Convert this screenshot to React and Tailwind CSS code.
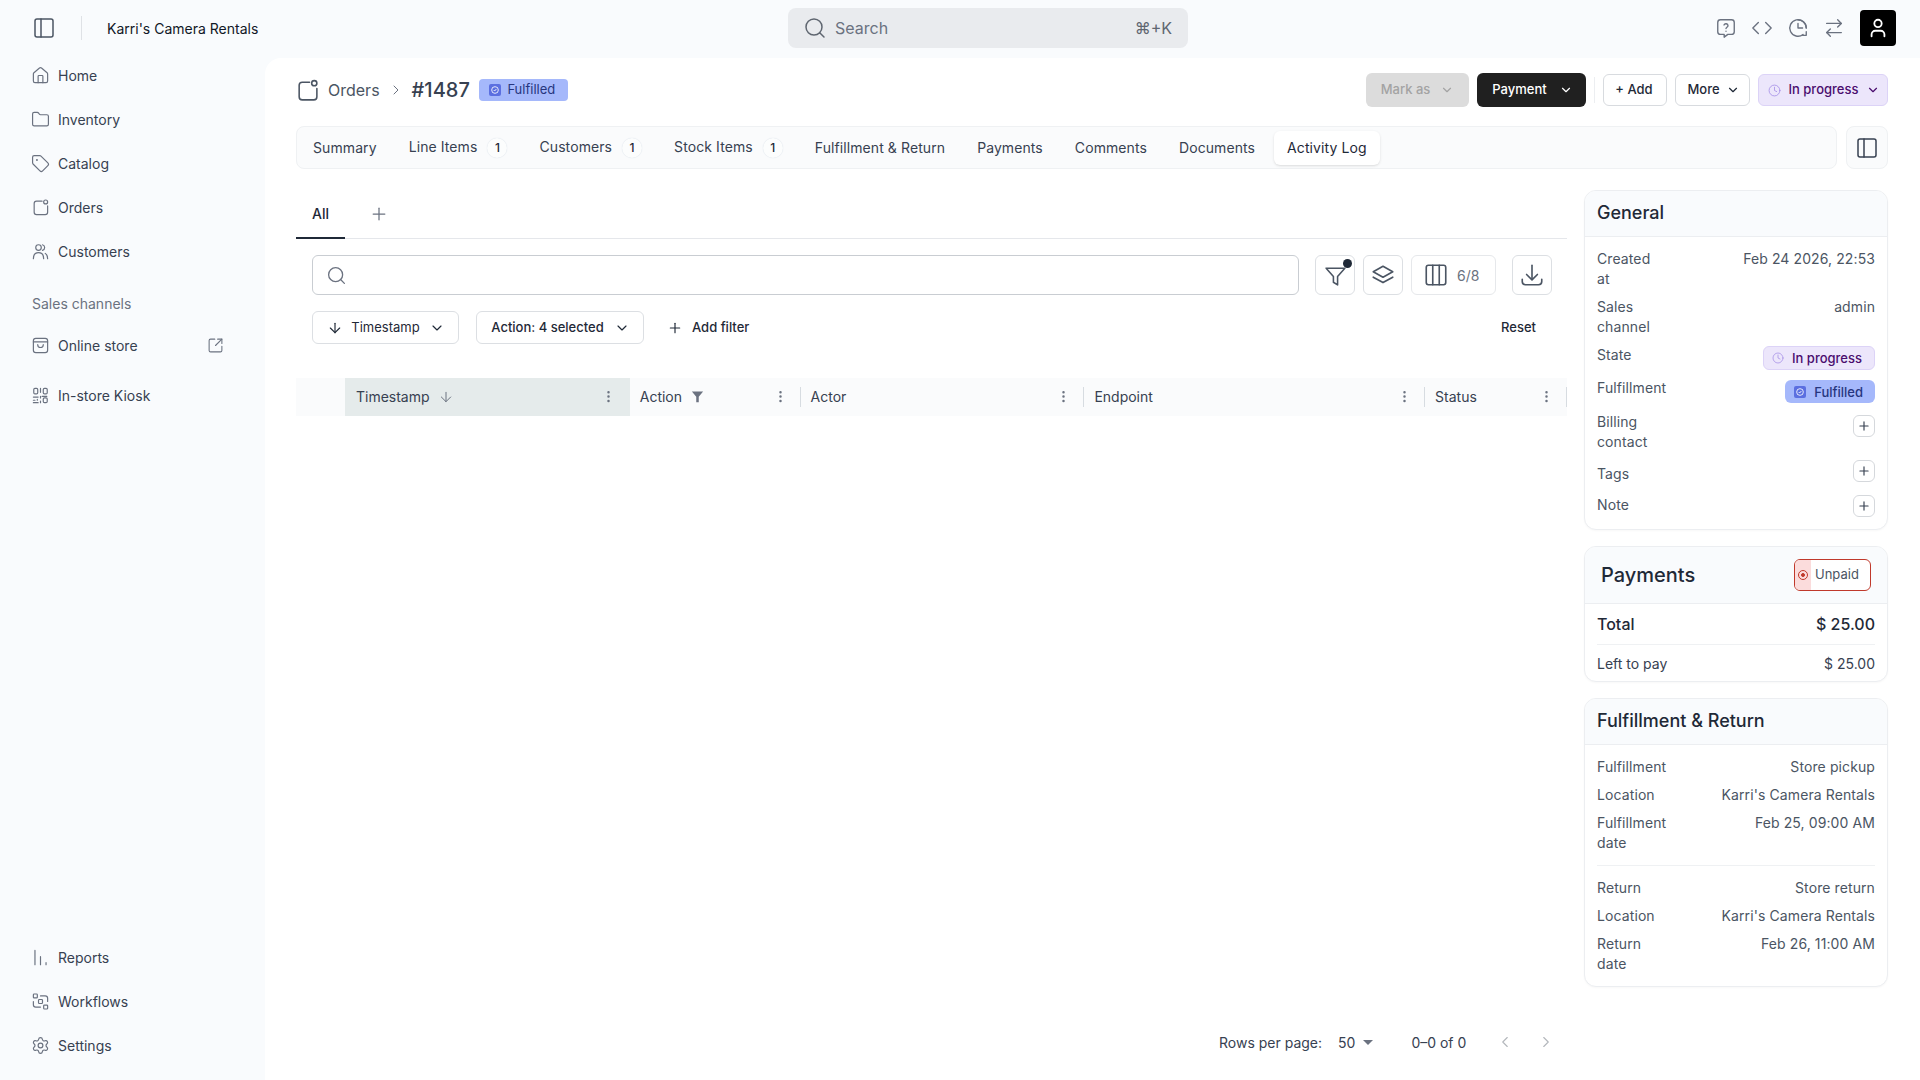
import React from "react";
import {
  House, Folder, Tag, Settings, SquareArrowOutUpRight, PanelLeft, Search, Code, ArrowRightLeft,
  ChevronRight, ChevronDown, ChevronLeft, Plus, ArrowDown, EllipsisVertical, Columns3, Clock, User,
} from "lucide-react";

const S = ({ size = 19, sw = 1.5, className = "", children }) => (
  <svg width={size} height={size} viewBox="0 0 24 24" fill="none" stroke="currentColor" strokeWidth={sw} strokeLinecap="round" strokeLinejoin="round" className={"shrink-0 " + className}>
    {children}
  </svg>
);

const OrdersIcon = (p) => (
  <S {...p}>
    <path d="M14 4H7a3 3 0 0 0-3 3v11a3 3 0 0 0 3 3h11a3 3 0 0 0 3-3v-8" />
    <circle cx="18.5" cy="5" r="2.5" />
  </S>
);
const UsersIcon = (p) => (
  <S {...p}>
    <circle cx="9.5" cy="7" r="3.5" />
    <path d="M3 21c0-4.5 2.5-7.5 6.5-7.5S16 16.5 16 21" />
    <path d="M14.5 3.5a3.6 3.6 0 0 1 0 7" />
    <path d="M18 14.5c2 1 3 3.400 3 6.500" />
  </S>
);
const BagIcon = (p) => (
  <S {...p}>
    <rect x="3" y="3" width="18" height="18" rx="3" />
    <path d="M3 7.500h18" />
    <path d="M8.500 11c0 2 1.500 3.500 3.500 3.500s3.500-1.500 3.500-3.500" />
  </S>
);
const QrIcon = (p) => (
  <S {...p}>
    <rect x="3.500" y="3" width="5" height="7" rx="1.500" />
    <rect x="15.500" y="3" width="5" height="7" rx="1.500" />
    <rect x="15.500" y="15" width="5" height="6" rx="1.500" />
    <path d="M12 3v5M3 14h6M12 13v2M14 13h6M3 18h2M3 21h6M8 17v1M12 19v2" />
  </S>
);
const BarsIcon = (p) => (
  <S {...p}>
    <path d="M5 3v18M12 11v10M19 18.500V21" />
  </S>
);
const FlowIcon = (p) => (
  <S {...p}>
    <rect x="3" y="2.500" width="5" height="5" rx="1" />
    <rect x="9.500" y="9.500" width="5" height="5" rx="1" />
    <rect x="16" y="16.500" width="5" height="5" rx="1" />
    <path d="M12 5h6a3 3 0 0 1 3 3v4" />
    <path d="M12 19H6a3 3 0 0 1-3-3v-4" />
  </S>
);
const HelpIcon = (p) => (
  <S {...p}>
    <path d="M6 3h12a3 3 0 0 1 3 3v10a3 3 0 0 1-3 3h-4l-4 3v-3H6a3 3 0 0 1-3-3V6a3 3 0 0 1 3-3z" />
    <path d="M9.800 8.700a2.300 2.300 0 0 1 4.400.8c0 1.500-2.200 1.800-2.200 3" />
    <path d="M12 15.500h.01" />
  </S>
);
const HistoryIcon = (p) => (
  <S {...p}>
    <path d="M21 12a9 9 0 1 0-3.500 7.100" />
    <path d="M12 3a9 9 0 0 1 9 9" />
    <path d="M12 7v5h5" />
    <path d="M21 16v4h-4" />
  </S>
);
const FunnelIcon = (p) => (
  <S {...p}>
    <path d="M3 5h18l-7 8v8l-4-2.500V13z" />
  </S>
);
const LayersIcon = (p) => (
  <S {...p}>
    <path d="M12 4l9 5-9 5-9-5z" />
    <path d="M3 14l9 5 9-5" />
  </S>
);
const DownloadIcon = (p) => (
  <S {...p}>
    <path d="M12 3v13" />
    <path d="M7 11.500l5 5 5-5" />
    <path d="M3 16v2a3 3 0 0 0 3 3h12a3 3 0 0 0 3-3v-2" />
  </S>
);
const BadgeCheck = () => (
  <span className="flex h-3 w-3 shrink-0 items-center justify-center rounded-[2px] bg-[#5b6fe0]">
    <svg width="8" height="8" viewBox="0 0 24 24" fill="none" stroke="#ffffff" strokeWidth="2.500">
      <circle cx="12" cy="12" r="10" />
      <path d="M8 12l3 3 5-6" />
    </svg>
  </span>
);

const NavItem = ({ icon, label, right }) => (
  <div className="flex h-11 items-center gap-2 pl-[31px] pr-[41px] text-[14px] text-[#374151]">
    <span className="text-[#6b7280]">{icon}</span>
    <span className="flex-1">{label}</span>
    {right}
  </div>
);

const Tab = ({ label, count, active }) => (
  <div className={active ? "flex h-[34px] items-center rounded-md bg-white px-[13px] text-[14px] tracking-[0.09px] text-[#1f2937] shadow-sm" : "flex h-[34px] items-center gap-[10px] px-[13px] text-[14px] tracking-[0.09px] text-[#374151]"}>
    <span className={count ? "-mt-[2px]" : ""}>{label}</span>
    {count ? <span className="flex h-5 w-5 items-center justify-center rounded-full bg-[#fcfdfd] text-[12px] font-medium text-[#1f2937] shadow-[0_0_1px_#cbd5e1]">{count}</span> : null}
  </div>
);

const HeaderCell = ({ w, label, active, extra }) => (
  <div className={(active ? "bg-[#e5ebeb] pl-[11px] pr-[14px] " : "pl-[10px] pr-[12px] ") + w + " flex h-full items-center justify-between pb-px text-[14px] text-[#374151]"}>
    <span className="flex items-center gap-2">{label}{extra}</span>
    <EllipsisVertical size={15} className="text-[#6b7280]" />
  </div>
);
const HeadSep = () => <div className="h-[20px] w-px bg-[#d7dce1]" />;

const Row = ({ label, value, className = "" }) => (
  <div className={"flex items-start justify-between text-[14px] leading-5 tracking-[0.1px] text-[#4b5563] " + className}>
    <span className="w-[66px]">{label}</span>
    <span className="text-right">{value}</span>
  </div>
);

const PlusBtn = ({ className = "" }) => (
  <span className={"flex h-[22px] w-[22px] items-center justify-center rounded-md border border-[#d5d8dc] bg-white text-[#374151] " + className}>
    <Plus size={14} />
  </span>
);

const Card = ({ children, className = "" }) => (
  <div className={"overflow-hidden rounded-xl border border-[#eceef1] bg-white shadow-[0_1px_2px_rgba(0,0,0,0.03)] " + className}>{children}</div>
);

export default function App() {
  return (
    <div className="flex h-screen w-screen flex-col overflow-hidden bg-[#f9fbfd] font-[Inter,sans-serif] text-[14px]">
      <header className="flex h-[56px] shrink-0 items-center pl-[32px] pr-[24px]">
        <PanelLeft size={24} strokeWidth={1.5} className="text-[#4b5563]" />
        <div className="ml-[25px] h-6 w-px bg-[#dfe2e6]" />
        <span className="ml-[25px] w-[681px] text-[14px] text-[#111827]">Karri's Camera Rentals</span>
        <div className="flex h-10 w-[400px] items-center rounded-lg bg-[#e9ebee] pl-[15px] pr-[16px] text-[#6b7280]">
          <Search size={24} strokeWidth={1.5} className="text-[#5f6670]" />
          <span className="ml-[8px] flex-1 text-[16px]">Search</span>
          <span className="text-[16px] text-[#5f6670]">⌘+K</span>
        </div>
        <div className="ml-auto flex items-center gap-[14px] text-[#6b7280]">
          <HelpIcon size={22} />
          <Code size={22} strokeWidth={1.5} />
          <HistoryIcon size={22} />
          <ArrowRightLeft size={22} strokeWidth={1.5} />
          <div className="ml-px flex h-9 w-9 items-center justify-center rounded-[4px] bg-black text-white">
            <User size={22} strokeWidth={2} />
          </div>
        </div>
      </header>
      <div className="flex min-h-0 flex-1">
        <aside className="-mt-[3px] flex w-[265px] shrink-0 flex-col justify-between pb-[13px]">
          <div>
            <NavItem icon={<House size={19} strokeWidth={1.5} />} label="Home" />
            <NavItem icon={<Folder size={19} strokeWidth={1.5} />} label="Inventory" />
            <NavItem icon={<Tag size={19} strokeWidth={1.5} />} label="Catalog" />
            <NavItem icon={<OrdersIcon />} label="Orders" />
            <NavItem icon={<UsersIcon />} label="Customers" />
            <div className="mt-[21px] pl-[32px] text-[14px] leading-5 text-[#6b7280]">Sales channels</div>
            <div className="mt-[9px]">
              <NavItem icon={<BagIcon />} label="Online store" right={<SquareArrowOutUpRight size={17} strokeWidth={1.5} className="text-[#6b7280]" />} />
            </div>
            <div className="mt-[6px]">
              <NavItem icon={<QrIcon />} label="In-store Kiosk" />
            </div>
          </div>
          <div>
            <NavItem icon={<BarsIcon />} label="Reports" />
            <NavItem icon={<FlowIcon />} label="Workflows" />
            <NavItem icon={<Settings size={19} strokeWidth={1.5} />} label="Settings" />
          </div>
        </aside>
        <main className="mt-[2px] flex min-w-0 flex-1 flex-col rounded-tl-2xl bg-white pl-[31px] pr-[32px] pt-[15px]">
          <div className="flex h-[34px] shrink-0 items-center">
            <OrdersIcon size={25} className="-ml-px text-[#4b5563]" />
            <span className="ml-[8px] text-[16px] text-[#4b5563]">Orders</span>
            <ChevronRight size={16} strokeWidth={1.5} className="mx-2 text-[#6b7280]" />
            <span className="text-[20px] font-medium text-[#374151]">#1487</span>
            <span className="ml-[9px] flex h-[22px] w-[89px] items-center justify-center gap-[6px] rounded-[4px] bg-[#a5b8fb] pr-[2px] text-[13px] text-[#27367f]">
              <BadgeCheck />
              Fulfilled
            </span>
            <div className="ml-auto flex items-center gap-2">
              <span className="flex h-[34px] w-[103px] items-center justify-center gap-[10px] rounded-md bg-[#dcdcdc] text-[13px] font-medium text-[#a3a3a3]">
                Mark as <ChevronDown size={14} />
              </span>
              <span className="flex h-[34px] w-[109px] items-center justify-center gap-[12px] rounded-md bg-[#202020] pl-[2px] text-[13px] font-medium text-white">
                Payment <ChevronDown size={14} />
              </span>
              <span className="h-[26px] w-px bg-[#eceef1]" />
              <span className="flex h-[32px] w-[64px] items-center justify-center rounded-md border border-[#d8dbdf] pr-[2px] text-[13px] font-medium text-[#1f2937]">+ Add</span>
              <span className="flex h-[32px] w-[75px] items-center justify-center gap-[6px] rounded-md border border-[#d8dbdf] pl-[2px] text-[13px] font-medium text-[#1f2937]">
                More <ChevronDown size={14} />
              </span>
              <span className="flex h-[32px] w-[130px] items-center justify-center gap-[8px] rounded-md border border-[#dcd3f7] bg-[#ece6fb] pl-[2px] text-[13px] font-medium text-[#4a0d6e]">
                <Clock size={13} strokeWidth={1.5} className="text-[#a48ee6]" />
                In progress
                <ChevronDown size={14} />
              </span>
            </div>
          </div>

          <div className="mt-[19px] flex shrink-0 gap-[9px]">
            <div className="flex h-[43px] flex-1 items-center gap-[6px] rounded-lg border border-[#eff1f3] bg-[#fafbfc] pl-[3px]">
              <Tab label="Summary" />
              <Tab label="Line Items" count="1" />
              <Tab label="Customers" count="1" />
              <Tab label="Stock Items" count="1" />
              <Tab label="Fulfillment & Return" />
              <Tab label="Payments" />
              <Tab label="Comments" />
              <Tab label="Documents" />
              <Tab label="Activity Log" active />
            </div>
            <div className="flex h-[43px] w-[42px] items-center justify-center rounded-lg border border-[#eff1f3] bg-[#fafbfc]">
              <PanelLeft size={24} strokeWidth={1.5} className="text-[#374151]" />
            </div>
          </div>

          <div className="mt-[21px] flex min-h-0 flex-1 gap-[17px]">
            <div className="flex min-w-0 flex-1 flex-col">
              <div className="flex h-[49px] shrink-0 border-b border-[#e5e7eb]">
                <div className="flex h-[49px] w-[49px] items-center justify-center border-b-2 border-[#1f2937] pb-px text-[14px] font-medium text-[#1f2937]">All</div>
                <div className="ml-[24px] flex h-[48px] items-center text-[#6b7280]"><Plus size={20} strokeWidth={1.5} /></div>
              </div>
              <div className="ml-[16px] mr-[15px] mt-[16px] flex shrink-0 gap-2">
                <div className="flex h-10 flex-1 items-center rounded-md border border-[#c9cdd2] pl-[13px] text-[#6b7280]">
                  <Search size={21} strokeWidth={1.5} />
                </div>
                <span className="relative ml-2 flex h-10 w-10 items-center justify-center rounded-md border border-[#dcdfe3] text-[#4b5563]">
                  <FunnelIcon size={25} />
                  <span className="absolute right-[2px] top-[3px] h-[9px] w-[9px] rounded-full bg-[#1f2937]" />
                </span>
                <span className="flex h-10 w-10 items-center justify-center rounded-md border border-[#dcdfe3] text-[#4b5563]">
                  <LayersIcon size={26} />
                </span>
                <span className="flex h-10 w-[85px] items-center gap-[8px] rounded-md border border-[#e6e8eb] pl-[11px] text-[14px] text-[#6b7280]">
                  <Columns3 size={26} strokeWidth={1.5} className="text-[#4b5563]" />
                  6/8
                </span>
                <span className="ml-2 flex h-10 w-10 items-center justify-center rounded-md border border-[#dcdfe3] text-[#4b5563]">
                  <DownloadIcon size={26} />
                </span>
              </div>
              <div className="ml-[16px] mr-[15px] mt-[16px] flex h-[33px] shrink-0 items-center">
                <span className="flex h-[33px] w-[147px] items-center justify-center gap-[8px] rounded-md border border-[#dcdfe3] pl-px text-[13px] text-[#1f2937]">
                  <ArrowDown size={16} strokeWidth={1.75} /> Timestamp <ChevronDown size={16} strokeWidth={1.75} className="ml-[1px]" />
                </span>
                <span className="ml-[17px] flex h-[33px] w-[168px] items-center justify-center gap-[10px] rounded-md border border-[#dcdfe3] pl-px text-[13px] font-medium text-[#1f2937]">
                  Action: 4 selected <ChevronDown size={16} strokeWidth={1.75} />
                </span>
                <span className="ml-[23px] flex items-center gap-[9px] pt-px text-[13px] font-medium text-[#1f2937]">
                  <Plus size={16} strokeWidth={1.75} /> Add filter
                </span>
                <span className="ml-auto mr-[16px] pt-px text-[13px] font-medium text-[#1f2937]">Reset</span>
              </div>
              <div className="mt-[34px] flex h-[38px] shrink-0 items-center bg-[#fafbfc]">
                <div className="w-[49px]" />
                <HeaderCell w="w-[285px]" active label="Timestamp" extra={<ArrowDown size={16} strokeWidth={1.5} className="text-[#6b7280]" />} />
                <HeaderCell w="w-[170px]" label="Action" extra={<svg width="15" height="15" viewBox="0 0 24 24" fill="#6b7280"><path d="M3 4h18l-7 8.500V21h-4v-8.500z" /></svg>} />
                <HeadSep />
                <HeaderCell w="w-[283px]" label="Actor" />
                <HeadSep />
                <HeaderCell w="w-[340px]" label="Endpoint" />
                <HeadSep />
                <HeaderCell w="w-[141px]" label="Status" />
                <HeadSep />
              </div>
              <div className="mb-[18px] mt-auto flex h-10 shrink-0 items-center text-[14px] text-[#374151]">
                <span className="ml-[923px]">Rows per page:</span>
                <span className="ml-[16px]">50</span>
                <svg width="12" height="12" viewBox="0 0 12 12" className="ml-[7px]"><path d="M1 4h10L6 9z" fill="#6b7280" /></svg>
                <span className="ml-[37px]">0–0 of 0</span>
                <ChevronLeft size={18} strokeWidth={1.5} className="ml-[30px] text-[#b3b7bc]" />
                <ChevronRight size={18} strokeWidth={1.5} className="ml-[23px] text-[#b3b7bc]" />
              </div>
            </div>

            <div className="flex w-[304px] shrink-0 flex-col gap-[16px]">
              <Card>
                <div className="flex h-[46px] items-center border-b border-[#eceef1] bg-[#f9fbfd] px-3 pb-[2px] text-[18px] font-medium text-[#1f2937]">General</div>
                <div className="flex flex-col px-3 pb-3 pt-3">
                  <Row label="Created at" value="Feb 24 2026, 22:53" />
                  <Row label="Sales channel" value="admin" className="mt-2" />
                  <div className="mt-2 flex h-[25px] items-start justify-between text-[14px] leading-5 tracking-[0.1px] text-[#4b5563]">
                    <span>State</span>
                    <span className="mt-px flex h-6 w-[112px] items-center justify-end gap-[8px] rounded-md border border-[#dcd3f7] bg-[#ece6fb] pr-[12px] text-[13px] font-medium tracking-normal text-[#4a0d6e]">
                      <Clock size={12} strokeWidth={1.5} className="text-[#a48ee6]" /> In progress
                    </span>
                  </div>
                  <div className="mt-2 flex h-[26px] items-start justify-between text-[14px] leading-5 tracking-[0.1px] text-[#4b5563]">
                    <span>Fulfillment</span>
                    <span className="mt-[2px] flex h-[23px] w-[90px] items-center justify-end gap-2 rounded-md bg-[#a5b8fb] pr-[12px] text-[13px] font-medium tracking-normal text-[#27367f]">
                      <BadgeCheck /> Fulfilled
                    </span>
                  </div>
                  <div className="mt-2 flex items-start justify-between text-[14px] leading-5 tracking-[0.1px] text-[#4b5563]">
                    <span className="w-[66px]">Billing contact</span>
                    <PlusBtn className="mt-[3px]" />
                  </div>
                  <div className="mt-2 flex items-start justify-between text-[14px] leading-5 tracking-[0.1px] text-[#4b5563]">
                    <span className="mt-[4px]">Tags</span>
                    <PlusBtn />
                  </div>
                  <div className="mt-2 flex items-start justify-between text-[14px] leading-5 tracking-[0.1px] text-[#4b5563]">
                    <span className="mt-[3px]">Note</span>
                    <PlusBtn className="mt-[3px]" />
                  </div>
                </div>
              </Card>
              <Card>
                <div className="flex h-[57px] items-center justify-between border-b border-[#eceef1] bg-[#f9fbfd] pl-4 pr-4 text-[20px] font-medium text-[#1f2937]">
                  Payments
                  <span className="flex h-[32px] w-[77px] items-center overflow-hidden rounded-md border border-[#c0392b] bg-white text-[13px] font-normal text-[#4b5563]">
                    <span className="flex h-full w-4 items-center justify-center bg-[#fbdcdc]">
                      <svg width="12" height="12" viewBox="0 0 24 24" fill="none" stroke="#c0392b" strokeWidth="2"><circle cx="12" cy="12" r="9" /><circle cx="12" cy="12" r="3" fill="#c0392b" /></svg>
                    </span>
                    <span className="ml-[4px]">Unpaid</span>
                  </span>
                </div>
                <div className="px-3">
                  <div className="flex h-[41px] items-center justify-between border-b border-[#eff1f3] text-[16px] font-medium text-[#1f2937]">
                    <span>Total</span>
                    <span>$ 25.00</span>
                  </div>
                  <div className="flex h-[36px] items-center justify-between text-[14px] text-[#374151]">
                    <span>Left to pay</span>
                    <span>$ 25.00</span>
                  </div>
                </div>
              </Card>
              <Card>
                <div className="flex h-[46px] items-center border-b border-[#eceef1] bg-[#f9fbfd] px-3 pb-[2px] text-[18px] font-medium text-[#1f2937]">Fulfillment &amp; Return</div>
                <div className="px-3 pb-3 pt-3">
                  <Row label="Fulfillment" value="Store pickup" />
                  <Row label="Location" value="Karri's Camera Rentals" className="mt-2" />
                  <Row label="Fulfillment date" value="Feb 25, 09:00 AM" className="mt-2" />
                  <div className="my-3 h-px bg-[#eff1f3]" />
                  <Row label="Return" value="Store return" />
                  <Row label="Location" value="Karri's Camera Rentals" className="mt-2" />
                  <Row label="Return date" value="Feb 26, 11:00 AM" className="mt-2" />
                </div>
              </Card>
            </div>
          </div>
        </main>
      </div>
    </div>
  );
}
